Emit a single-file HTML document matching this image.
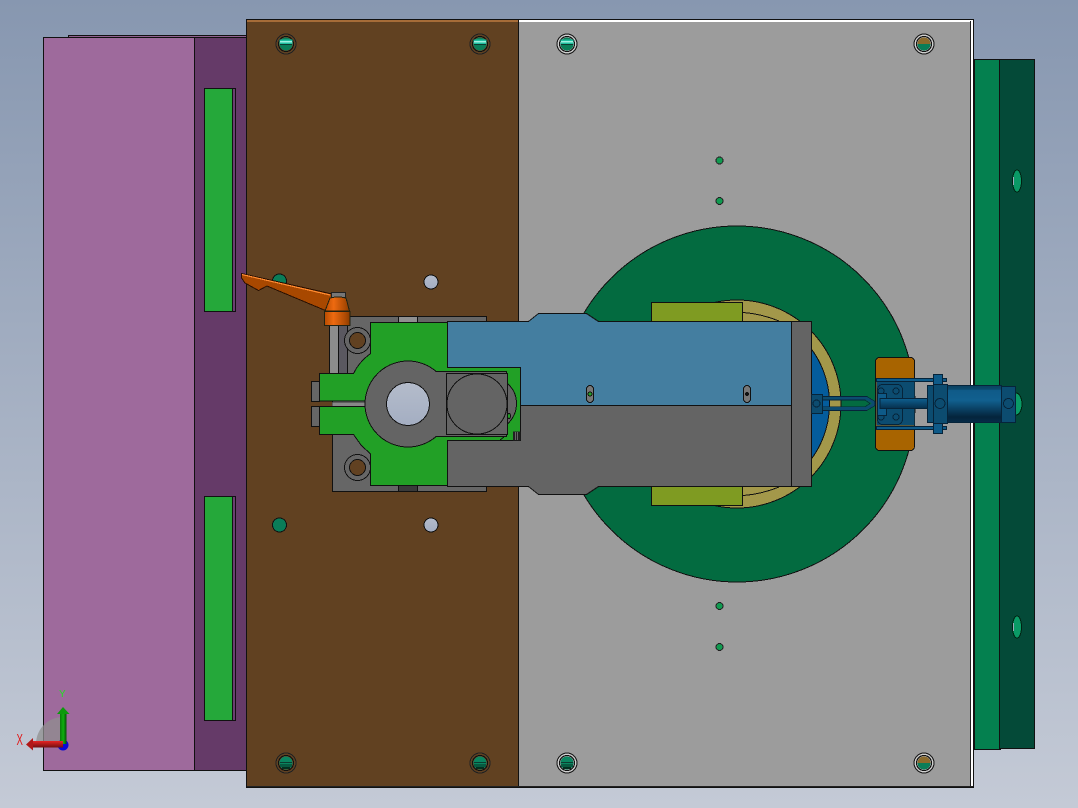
<!DOCTYPE html>
<html>
<head>
<meta charset="utf-8">
<style>
html,body{margin:0;padding:0;width:1078px;height:808px;overflow:hidden;background:#a5afc2}
svg{display:block}
text{font-family:"Liberation Sans",sans-serif}
</style>
</head>
<body>
<svg width="1078" height="808" viewBox="0 0 1078 808" xmlns="http://www.w3.org/2000/svg" shape-rendering="crispEdges">
<defs>
<linearGradient id="bg" x1="0" y1="0" x2="0" y2="1"><stop offset="0" stop-color="#8797b0"/><stop offset="1" stop-color="#c4cad6"/></linearGradient>
<linearGradient id="cyl" x1="0" y1="0" x2="0" y2="1"><stop offset="0" stop-color="#0a3f60"/><stop offset=".1" stop-color="#0b4a6c"/><stop offset=".13" stop-color="#0f5a88"/><stop offset=".4" stop-color="#11608f"/><stop offset=".85" stop-color="#04243c"/><stop offset="1" stop-color="#062c48"/></linearGradient>
<linearGradient id="rod" x1="0" y1="0" x2="0" y2="1"><stop offset="0" stop-color="#0f6090"/><stop offset="1" stop-color="#062f4c"/></linearGradient>
<linearGradient id="knob" x1="0" y1="0" x2="1" y2="0"><stop offset="0" stop-color="#b84c00"/><stop offset=".35" stop-color="#ee6a10"/><stop offset=".8" stop-color="#b04c04"/><stop offset="1" stop-color="#8a3c00"/></linearGradient>
<linearGradient id="hole" x1="0" y1="0" x2="0" y2="1"><stop offset="0" stop-color="#b4bccb"/><stop offset="1" stop-color="#a4aec2"/></linearGradient>
<linearGradient id="gA" x1="0" y1="0" x2="1" y2="0"><stop offset="0" stop-color="#0a7a0a"/><stop offset=".5" stop-color="#10b010"/><stop offset="1" stop-color="#064f06"/></linearGradient>
<linearGradient id="rA" x1="0" y1="0" x2="0" y2="1"><stop offset="0" stop-color="#e82424"/><stop offset="1" stop-color="#701010"/></linearGradient>
<clipPath id="rightOfBody"><rect x="811" y="300" width="60" height="210"/></clipPath>
<g id="st"><circle r="10" fill="none" stroke="#222" stroke-width="1"/><circle r="7.5" fill="none" stroke="#111" stroke-width="1"/></g>
<g id="sg"><use href="#st"/><circle r="6.5" fill="#0a7d58"/><rect x="-6.5" y="-4.5" width="13" height="5" fill="#20c0a0"/><rect x="-6" y="-3" width="12" height="1.5" fill="#a0f0e0"/><rect x="-6" y="0" width="12" height="1" fill="#0c3c30"/></g>
<g id="sb"><use href="#st"/><circle r="6.5" fill="#0a8560"/><rect x="-6" y="-1" width="12" height="1" fill="#0c3c30"/><rect x="-6" y="1" width="12" height="3" fill="#075a40"/><rect x="-4" y="4" width="8" height="2" fill="#033020"/></g>
</defs>

<rect width="1078" height="808" fill="url(#bg)"/>

<!-- left pink block -->
<rect x="68.5" y="35.5" width="178" height="3" fill="#8f5f8e" stroke="#111"/>
<rect x="43.5" y="37.5" width="151" height="733" fill="#9e6a9c" stroke="#111"/>
<rect x="194.5" y="37.5" width="52" height="733" fill="#653a68" stroke="#111"/>
<rect x="204.5" y="88.5" width="31" height="223" fill="#25a83a" stroke="#111"/>
<rect x="204.5" y="496.5" width="31" height="224" fill="#25a83a" stroke="#111"/>
<rect x="232" y="89" width="3" height="222" fill="#6a4070"/>
<rect x="232" y="497" width="3" height="223" fill="#6a4070"/>
<rect x="232" y="89" width="1" height="222" fill="#111"/>
<rect x="232" y="497" width="1" height="223" fill="#111"/>

<!-- right green block -->
<rect x="974.5" y="59.5" width="26" height="690" fill="#04804f" stroke="#111"/>
<rect x="999.5" y="59.5" width="35" height="689" fill="#044a38" stroke="#111"/>
<ellipse cx="1017" cy="181" rx="4.5" ry="11" fill="#0a9a66" stroke="#021"/>
<ellipse cx="1017" cy="627" rx="4.5" ry="11" fill="#0a9a66" stroke="#021"/>
<rect x="1013" y="177" width="1" height="8" fill="#9ab"/>
<rect x="1013" y="623" width="1" height="8" fill="#9ab"/>

<!-- main plates -->
<rect x="246.5" y="19.5" width="272" height="768" fill="#614121" stroke="#111"/>
<rect x="247" y="20" width="271" height="2" fill="#a66c38"/>
<rect x="518.5" y="19.5" width="455" height="768" fill="#9c9c9c" stroke="#111"/>
<rect x="519" y="20" width="454" height="2" fill="#fff"/>
<rect x="971" y="21" width="2" height="766" fill="#fff"/>
<rect x="970" y="21" width="1" height="766" fill="#222"/>
<rect x="247" y="786" width="726" height="1" fill="#222"/>

<!-- screws -->
<use href="#sg" x="286" y="44"/>
<use href="#sg" x="480" y="44"/>
<use href="#sg" x="567" y="44"/>
<g transform="translate(924 44)"><use href="#st"/><circle r="6.5" fill="#0a7d58"/><path d="M-6.5 0A6.5 6.5 0 0 1 6.5 0Z" fill="#8a6a2c"/></g>
<use href="#sb" x="286" y="763"/>
<use href="#sb" x="480" y="763"/>
<use href="#sb" x="567" y="763"/>
<g transform="translate(924 763)"><use href="#st"/><circle r="6.5" fill="#0a7d58"/><path d="M-6.5 0A6.5 6.5 0 0 1 6.5 0Z" fill="#8a6a2c"/></g>
<g stroke="#d0d0d0" fill="none"><circle cx="567" cy="44" r="8.7"/><circle cx="924" cy="44" r="8.7"/><circle cx="567" cy="763" r="8.7"/><circle cx="924" cy="763" r="8.7"/></g>

<!-- small dots -->
<g fill="#109a50" stroke="#222">
<circle cx="719.5" cy="160.5" r="3.5"/><circle cx="719.5" cy="201" r="3.5"/>
<circle cx="719.5" cy="606" r="3.5"/><circle cx="719.5" cy="647" r="3.5"/>
</g>
<circle cx="279.5" cy="281" r="7" fill="#0a7d58" stroke="#111"/>
<circle cx="279.5" cy="525" r="7" fill="#0a7d58" stroke="#111"/>
<circle cx="431" cy="282" r="7" fill="url(#hole)" stroke="#111"/>
<circle cx="431" cy="525" r="7" fill="url(#hole)" stroke="#111"/>

<!-- big disc -->
<circle cx="737" cy="404" r="178" fill="#036b40" stroke="#111"/>
<circle cx="737" cy="404" r="104" fill="#a3984a" stroke="#111"/>
<path d="M743 312.5Q762 314 779 321M743 495.5Q762 494 779 487" fill="none" stroke="#111"/>
<circle cx="737" cy="404" r="92.5" fill="#045c9c" stroke="#111" clip-path="url(#rightOfBody)"/>
<rect x="651.5" y="302.5" width="91" height="19" fill="#7f9b22" stroke="#111"/>
<rect x="651.5" y="486.5" width="91" height="19" fill="#7f9b22" stroke="#111"/>

<!-- orange base under cylinder -->
<rect x="875.5" y="357.5" width="39" height="93" rx="4" fill="#a86400" stroke="#111"/>

<!-- grey plate under clamp -->
<path d="M347.5 316.5H486.5V491.5H332.5V373H347.5Z" fill="#666" stroke="#111"/>
<rect x="398.5" y="316.5" width="19" height="6" fill="#909090" stroke="#111"/>
<rect x="398.5" y="485.5" width="19" height="6" fill="#3a3a3a" stroke="#111"/>
<rect x="329.5" y="325.5" width="9" height="48" fill="#8c8c8c" stroke="#111"/>
<rect x="338.5" y="325.5" width="9" height="48" fill="#5a5860" stroke="#111"/>
<rect x="332" y="402" width="34" height="5" fill="#888" stroke="#333" stroke-width=".5"/>
<circle cx="357.5" cy="340.5" r="13" fill="#666" stroke="#111"/>
<circle cx="357.5" cy="340.5" r="8" fill="#614121" stroke="#111"/>
<circle cx="357.5" cy="467.5" r="13" fill="#666" stroke="#111"/>
<circle cx="357.5" cy="467.5" r="8" fill="#614121" stroke="#111"/>
<rect x="311.5" y="381.5" width="8" height="20" fill="#666" stroke="#111"/>
<rect x="311.5" y="406.5" width="8" height="20" fill="#666" stroke="#111"/>

<!-- body -->
<path d="M447.5 321.5H528.5L538.5 313.5H586.5L598.5 321.5H791.5V405.5H447.5Z" fill="#447ea0" stroke="#111"/>
<path d="M447.5 405.5H791.5V486.5H598.5L586.5 494.5H538.5L528.5 486.5H447.5Z" fill="#646464" stroke="#111"/>
<rect x="791.5" y="321.5" width="20" height="165" fill="#646464" stroke="#111"/>

<!-- green clamp -->
<path d="M370.5 322.5H447.5V367.5H520.5V440.5H447.5V485.5H370.5V454L361 445L353.5 434.5H319.5V406.5H366V401H319.5V373.5H353.5Q359 362 370.5 353.5Z" fill="#22a026" stroke="#111"/>
<path d="M505 381.5Q516.5 390 516.5 403.5Q516.5 417 505 426Z" fill="#646464" stroke="#111"/>
<rect x="513" y="431.5" width="7.5" height="9" fill="#222"/>
<rect x="515" y="432" width="1" height="8" fill="#666"/><rect x="517" y="432" width="1" height="8" fill="#666"/>
<path d="M500 440L504 437" stroke="#111" fill="none"/>
<circle cx="408" cy="404" r="43" fill="#646464" stroke="#111"/>
<path d="M436 371.5H506.5V436.5H436Z" fill="#646464" stroke="#111"/>
<rect x="425" y="372" width="20" height="64" fill="#646464"/>
<circle cx="408" cy="404" r="21.5" fill="url(#hole)" stroke="#111"/>
<rect x="446.5" y="373.5" width="61" height="61" fill="#646464" stroke="#111"/>
<circle cx="477" cy="404" r="30" fill="#646464" stroke="#111"/>
<ellipse cx="509" cy="416" rx="1.5" ry="2.5" fill="#22a026" stroke="#111"/>

<!-- slots -->
<rect x="586.5" y="385.5" width="7" height="17" rx="3.5" fill="#777" stroke="#111"/>
<circle cx="590" cy="394" r="2" fill="#22a026" stroke="#111"/>
<rect x="743.5" y="385.5" width="7" height="17" rx="3.5" fill="#777" stroke="#111"/>
<circle cx="747" cy="394" r="2" fill="#111"/>

<!-- lever -->
<path d="M241.5 273.5L332 294L345 298L329 312L267 286L258.5 290.5L245 283L241.5 278Z" fill="#a84800" stroke="#2a1000"/>
<path d="M242 274.5L330 295" stroke="#ff8a30" stroke-width="1.2" fill="none"/>
<rect x="331.5" y="292.5" width="14" height="5" fill="#777" stroke="#222"/>
<path d="M325 311L330 298Q338 296 346 298L349.5 311Z" fill="url(#knob)" stroke="#221"/>
<rect x="324.5" y="311.5" width="25.5" height="14" fill="url(#knob)" stroke="#221"/>

<!-- fork -->
<path d="M823 398.3H866L873 402V405L866 408.3H823" fill="none" stroke="#0c4c70" stroke-width="3"/>
<path d="M823 396.5H867L875 401.5V405.5L867 410.5H823M823 400H865L870 403.5L865 406.7H823" fill="none" stroke="#06243a" stroke-width=".7"/>
<rect x="811.5" y="394.5" width="11" height="19" fill="#0c4c70" stroke="#06243a"/>
<circle cx="816.5" cy="403.5" r="3.5" fill="#0c4c70" stroke="#06243a"/>

<!-- cylinder -->
<rect x="876.5" y="381.5" width="38" height="44" fill="#0c4c70"/>
<rect x="876.5" y="378.5" width="70" height="3" fill="#0e5a88" stroke="#06243a"/>
<rect x="876.5" y="426.5" width="70" height="3" fill="#0e5a88" stroke="#06243a"/>
<rect x="877.5" y="384.5" width="25" height="40" rx="5" fill="#0c4c70" stroke="#06243a"/>
<g fill="#0c4c70" stroke="#06243a"><circle cx="896" cy="391" r="3"/><circle cx="896" cy="417" r="3"/><circle cx="881" cy="391" r="3"/><circle cx="881" cy="417" r="3"/></g>
<rect x="877.5" y="393.5" width="9" height="22" fill="#0e5a88" stroke="#06243a"/>
<rect x="880" y="398.5" width="52" height="10" fill="url(#rod)" stroke="#06243a"/>
<rect x="933.5" y="374.5" width="9" height="12" fill="#0e5a88" stroke="#06243a"/>
<rect x="933.5" y="422.5" width="9" height="11" fill="#0e5a88" stroke="#06243a"/>
<rect x="927.5" y="385.5" width="6" height="37" fill="#0c4c70" stroke="#06243a"/>
<rect x="933.5" y="384.5" width="14" height="39" fill="#0c4c70" stroke="#06243a"/>
<circle cx="940" cy="403.5" r="5" fill="none" stroke="#06243a"/>
<rect x="947.5" y="385.5" width="54" height="37" fill="url(#cyl)" stroke="#06243a"/>
<ellipse cx="1016" cy="404" rx="6" ry="11" fill="#0a9a66" stroke="#021"/>
<rect x="1001.5" y="386.5" width="14" height="36" fill="#0c4c70" stroke="#06243a"/>
<circle cx="1008.5" cy="403.5" r="5" fill="none" stroke="#06243a"/>

<!-- triad -->
<g shape-rendering="auto">
<path d="M63 744H36A27 27 0 0 1 63 717Z" fill="#8f8f8f" fill-opacity=".75"/>
<circle cx="63" cy="745" r="5.5" fill="#0808d8"/>
<rect x="60" y="713" width="6.5" height="31" fill="url(#gA)"/>
<path d="M63 707L69.5 714H57Z" fill="#0c9a0c"/>
<rect x="33" y="741" width="30" height="6.5" fill="url(#rA)"/>
<path d="M26 744.5L33 738V750.5Z" fill="#b01818"/>
<text x="59" y="697" font-size="10" fill="#22e022">Y</text>
<text transform="translate(16.5 745) scale(.6 1)" font-size="16" fill="#e01818">X</text>
</g>
</svg>
</body>
</html>
